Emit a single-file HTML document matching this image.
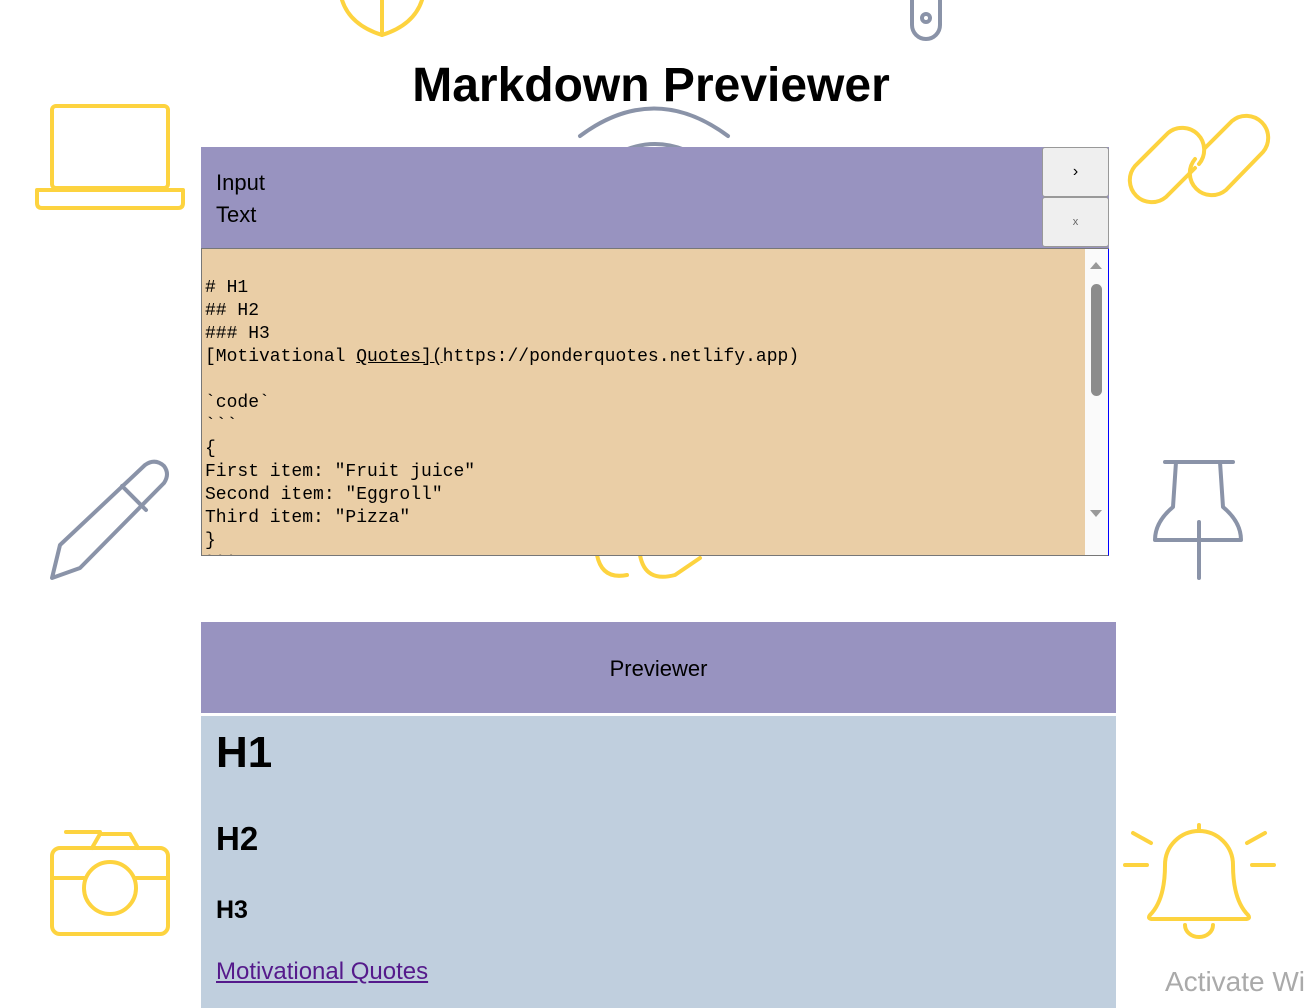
<!DOCTYPE html>
<html><head><meta charset="utf-8"><style>
html,body{margin:0;padding:0;background:#fff;width:1309px;height:1008px;overflow:hidden;position:relative;font-family:"Liberation Sans",sans-serif}
svg.bg{position:absolute;left:0;top:0}
h1.t{position:absolute;left:0;width:1302px;top:58px;margin:0;text-align:center;font-size:48px;font-weight:bold;line-height:56px}
.ih{position:absolute;left:201px;top:147px;width:908px;height:101px;background:#9893c0;border-bottom:1px solid #777}
.ih .l{position:absolute;left:15px;top:20px;font-size:22px;line-height:32px}
.btn{position:absolute;left:841px;width:65px;height:48px;background:#efefef;border:1px solid #999;border-radius:3px;text-align:center;line-height:48px;font-size:16px}
.ta{position:absolute;left:201px;top:249px;width:884px;height:306px;background:#eacea6;overflow:hidden;border-left:1px solid #777;border-bottom:1px solid #777}
.ta pre{margin:0;padding:28px 0 0 3px;font-family:"Liberation Mono",monospace;font-size:18px;line-height:23px}
.sb{position:absolute;left:1085px;top:249px;width:23px;height:306px;background:#fafafa;border-right:1px solid #00f;border-bottom:1px solid #777}
.ph{position:absolute;left:201px;top:622px;width:915px;height:91px;background:#9893c0;text-align:center;line-height:94px;font-size:22px}
.pb{position:absolute;left:201px;top:716px;width:915px;height:292px;background:#c0cfde}
.act{position:absolute;left:1165px;top:966px;font-size:28px;color:#aaa}
</style></head><body>
<svg class="bg" width="1309" height="1008" fill="none" stroke-linecap="round" stroke-linejoin="round">
<g stroke="#fdd33f" stroke-width="4">
<path d="M342 0 Q350 25 382 35 Q414 25 422 0"/><path d="M382 0V35"/>
<rect x="52" y="106" width="116" height="82" rx="4"/><path d="M37 190H183V203Q183 208 178 208H42Q37 208 37 203Z"/>
<path d="M1205 148 L1232 121 a22 22 0 0 1 31 31 L1226 190 a22 22 0 0 1 -31 -31"/>
<path d="M1195 168 L1166 197 a22 22 0 0 1 -31 -31 L1168 133 a22 22 0 0 1 31 31"/>
<path d="M597 555 q5 25 30 20 M640 555 q5 28 35 20 l25 -17"/>
<rect x="52" y="848" width="116" height="86" rx="8"/><path d="M52 878H84M136 878H168M66 832H100M92 848l8-14h30l8 14"/><circle cx="110" cy="888" r="26"/>
<path d="M1150 915 q15 -15 15 -50 a34 34 0 0 1 68 0 q0 35 15 50 q3 4-3 4H1153q-6 0-3-4z"/><path d="M1185 925 a14 12 0 0 0 28 0"/><path d="M1199 825v6M1125 865h22M1252 865h22M1133 833l18 10M1265 833l-18 10"/>
</g>
<g stroke="#8a93a8" stroke-width="4">
<path d="M912 0V25a14 14 0 0 0 28 0V0"/><circle cx="926" cy="18" r="4"/>
<path d="M580 136q74-55 148 0"/><path d="M625 150q30-12 60 0"/>
<path d="M52 578 L60 545 L145 465 Q155 458 164 466 Q170 474 164 483 L80 568 Z M122 486 L146 510"/>
<path d="M1165 462H1233M1176 462l-3 45q-18 15-18 33h86q0-18-18-33l-3-45M1199 522V578"/>
</g>
</svg>
<h1 class="t">Markdown Previewer</h1>
<div class="ih"><div class="l">Input<br>Text</div>
<div class="btn" style="top:0">›</div><div class="btn" style="top:50px;font-size:11px;color:#666">x</div></div>
<div class="ta"><pre># H1
## H2
### H3
[Motivational <u>Quotes](</u>https://ponderquotes.netlify.app)

&#96;code&#96;
&#96;&#96;&#96;
{
First item: "Fruit juice"
Second item: "Eggroll"
Third item: "Pizza"
}
&#96;&#96;&#96;</pre></div>
<div class="sb"><div style="position:absolute;left:5px;top:13px;width:0;height:0;border:6px solid transparent;border-bottom:7px solid #999;border-top:0"></div>
<div style="position:absolute;left:6px;top:35px;width:11px;height:112px;background:#8c8c8c;border-radius:6px"></div>
<div style="position:absolute;left:5px;top:261px;width:0;height:0;border:6px solid transparent;border-top:7px solid #999;border-bottom:0"></div></div>
<div class="ph">Previewer</div>
<div class="pb">
<div style="position:absolute;left:15px;top:12px;font-size:44px;font-weight:bold">H1</div>
<div style="position:absolute;left:15px;top:104px;font-size:33px;font-weight:bold">H2</div>
<div style="position:absolute;left:15px;top:180px;font-size:25px;font-weight:bold">H3</div>
<div style="position:absolute;left:15px;top:242px;font-size:24px;color:#551a8b;text-decoration:underline">Motivational Quotes</div>
</div>
<div class="act">Activate Wi</div>
</body></html>
